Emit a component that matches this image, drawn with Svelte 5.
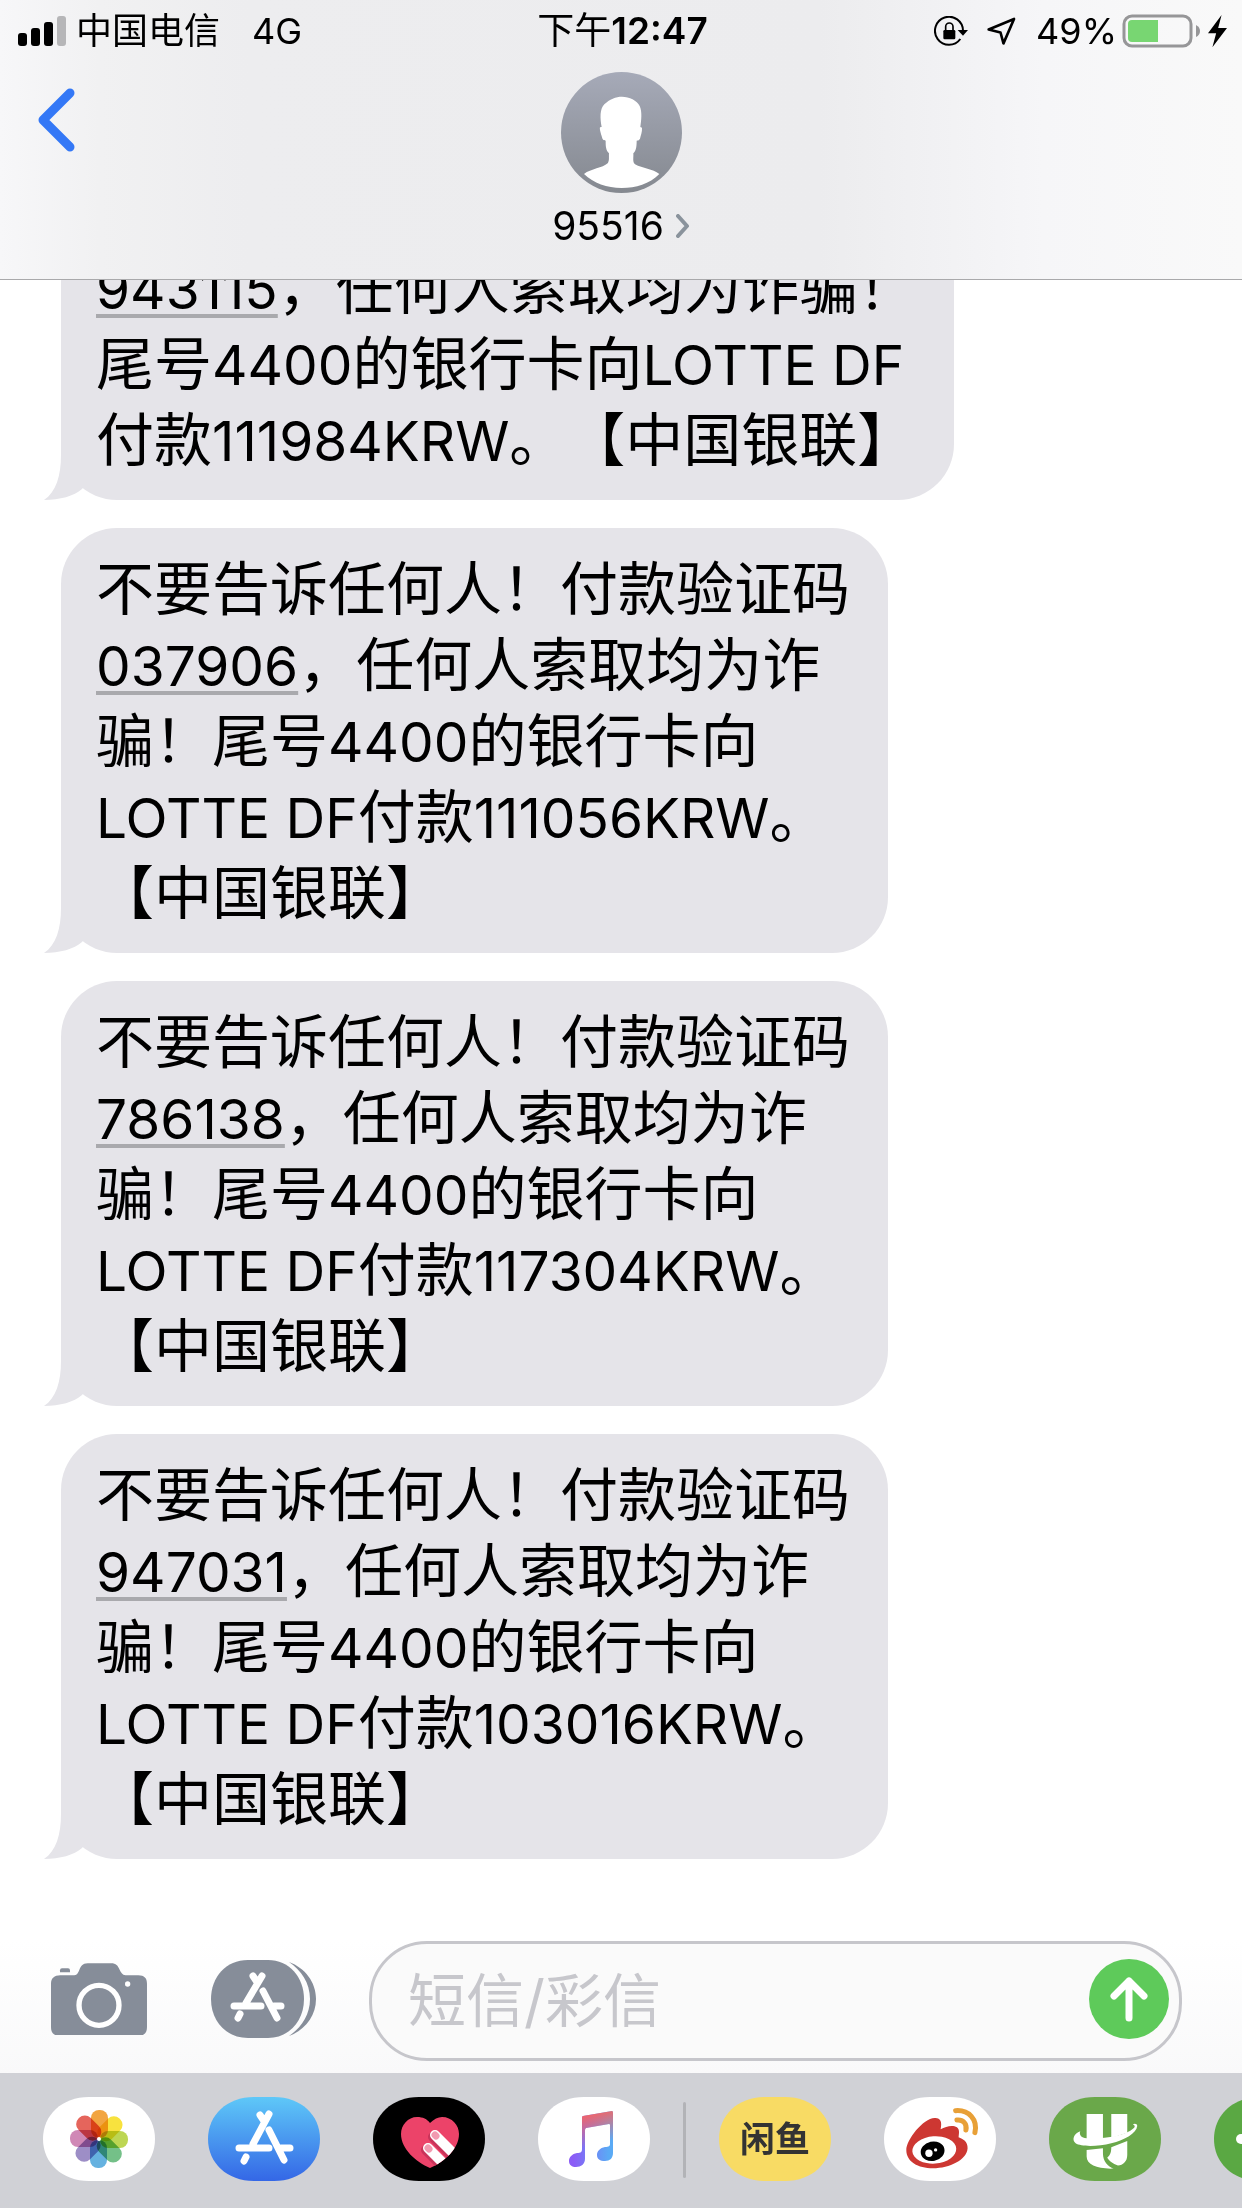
<script>
  const contact = "95516";

  const messages = [
    {
      intro: "",
      code: "943115",
      lines: ["，任何人索取均为诈骗！", "尾号4400的银行卡向LOTTE DF", "付款111984KRW。【中国银联】"]
    },
    {
      intro: "不要告诉任何人！付款验证码",
      code: "037906",
      lines: ["，任何人索取均为诈", "骗！尾号4400的银行卡向", "LOTTE DF付款111056KRW。", "【中国银联】"]
    },
    {
      intro: "不要告诉任何人！付款验证码",
      code: "786138",
      lines: ["，任何人索取均为诈", "骗！尾号4400的银行卡向", "LOTTE DF付款117304KRW。", "【中国银联】"]
    },
    {
      intro: "不要告诉任何人！付款验证码",
      code: "947031",
      lines: ["，任何人索取均为诈", "骗！尾号4400的银行卡向", "LOTTE DF付款103016KRW。", "【中国银联】"]
    }
  ];

  // odd parts are the latin runs
  const split = (line) => line.split(/([\x20-\x7e]+)/);

  const apps = [
    { id: "photos", label: "照片", color: "#ffffff" },
    { id: "store", label: "App Store", color: "url(#storeBlue)" },
    { id: "touch", label: "Digital Touch", color: "#000000" },
    { id: "music", label: "音乐", color: "#ffffff" },
    { id: "xianyu", label: "闲鱼", color: "#f8db64" },
    { id: "weibo", label: "微博", color: "#ffffff" },
    { id: "umetrip", label: "航旅", color: "#6aa84a" },
    { id: "more", label: "更多", color: "#5aa843" }
  ];

  const petals = ["#f2a541", "#f8e23e", "#bdd653", "#74c088", "#66b2e0", "#9d8ec6", "#d088b6", "#e5655c"];

  let draft = $state("");
</script>

{#snippet text(line)}
  {#each split(line) as part, i}{#if i % 2}<span class="latin">{part}</span>{:else}{part}{/if}{/each}
{/snippet}

<div class="phone">
  <header>
    <div class="status">
      <div class="status_left">
        <svg class="signal" viewBox="0 0 48 30" aria-hidden="true">
          <rect x="0" y="17" width="9" height="13" rx="3" />
          <rect x="13" y="12" width="9" height="18" rx="3" />
          <rect x="26" y="6" width="9" height="24" rx="3" />
          <rect x="39" y="0" width="9" height="30" rx="3" fill="#b6b6b8" />
        </svg>
        <span>中国电信</span>
        <span class="network">4G</span>
      </div>

      <div class="time">下午<b>12:47</b></div>

      <div class="status_right">
        <svg class="lock" viewBox="0 0 102 92" aria-hidden="true">
          <path d="M87 44A42 42 0 1 0 79 69" fill="none" stroke="#000" stroke-width="6" />
          <path d="M71 42H102L87 59Z" />
          <rect x="28" y="42" width="36" height="28" rx="4" />
          <path d="M35 44V32a11 11 0 0 1 22 0V44" fill="none" stroke="#000" stroke-width="5" />
        </svg>
        <svg class="location" viewBox="0 0 88 88" aria-hidden="true">
          <path d="M5 38L82 6L50 80L41 47Z" fill="none" stroke="#000" stroke-width="8" stroke-linejoin="round" />
        </svg>
        <span>49%</span>
        <svg class="battery" viewBox="0 0 78 34" aria-hidden="true">
          <rect x="2" y="2" width="67" height="30" rx="8" fill="none" stroke="#969698" stroke-width="3" />
          <path d="M10 6H36V28H10Q6 28 6 24V10Q6 6 10 6Z" fill="#78d672" />
          <path d="M74 11Q78 13 78 17T74 23Z" fill="#969698" />
        </svg>
        <svg class="bolt" viewBox="0 0 56 96" aria-hidden="true">
          <path d="M40 0L0 54H24L13 95L56 38H30Z" />
        </svg>
      </div>
    </div>

    <div class="nav">
      <button class="back" aria-label="返回">
        <svg viewBox="0 0 38 64"><path d="M33 5L6 32L33 59" fill="none" stroke="#3478f6" stroke-width="9" stroke-linecap="round" stroke-linejoin="round" /></svg>
      </button>
      <button class="contact">
        <svg class="avatar" viewBox="0 0 363 363" aria-hidden="true">
          <defs>
            <linearGradient id="avatarGray" x1="0" y1="0" x2="0" y2="1">
              <stop offset="0" stop-color="#a6aab8" />
              <stop offset="1" stop-color="#858990" />
            </linearGradient>
          </defs>
          <circle cx="181.500" cy="181.500" r="181.500" fill="url(#avatarGray)" />
          <path fill="#fff" d="M69 306C90 290 125 288 140 274C146 266 143 255 144 244C134 234 134 220 134 206C127 204 125 204 123 196C120 185 115 172 117 166L122 165C117 140 116 110 130 97C145 82 165 74 183 74C205 74 228 85 236 102C244 120 241 145 238 165L243 167C244 180 239 190 237 200C234 206 230 205 227 206C227 222 226 235 217 244C218 258 214 270 222 277C245 290 275 290 295 306C265 336 225 348 182 348C138 348 98 334 69 306Z" />
        </svg>
        <span class="name">
          {contact}
          <svg viewBox="0 0 14 24" aria-hidden="true"><path d="M2 2L11 12L2 22" fill="none" stroke="#8a939c" stroke-width="4" stroke-linecap="round" stroke-linejoin="round" /></svg>
        </span>
      </button>
    </div>
  </header>

  <main class="thread">
    {#each messages as message}
      <div class="bubble">
        {#if message.intro}
          <p>{message.intro}</p>
        {/if}
        {#each message.lines as line, i}
          <p>{#if i === 0}<a class="latin" href="#{message.code}">{message.code}</a>{/if}{@render text(line)}</p>
        {/each}
        <svg class="tail" viewBox="0 0 60 60" aria-hidden="true"><path d="M17 0V15C17 36 12 52 0 60C16 60 30 56 38 49L60 20L40 0Z" fill="#e5e4e9" /></svg>
      </div>
    {/each}
  </main>

  <form class="composer" onsubmit={(e) => e.preventDefault()}>
    <button class="camera" type="button" aria-label="相机">
      <svg viewBox="0 0 288 218">
        <path fill="#868d99" d="M28 37H66C78 37 80 31 84 23C90 10 94 1 110 1H180C196 1 200 8 206 20C212 32 216 37 228 37H262C280 37 288 46 288 62V192C288 210 280 218 262 218H26C8 218 0 210 0 192V62C0 46 10 37 28 37Z" />
        <path fill="#868d99" d="M27 28V22Q27 16 33 16H51Q57 16 57 22V28Z" />
        <circle cx="144" cy="127" r="60" fill="none" stroke="#fff" stroke-width="16" />
        <circle cx="230" cy="63" r="8" fill="#fff" />
      </svg>
    </button>
    <button class="drawer" type="button" aria-label="App">
      <svg viewBox="0 0 105 78">
        <path fill="#868d99" d="M78 2C94 8 105 22 105 39S94 70 78 76C90 68 99 55 99 39S90 10 78 2Z" />
        <path fill="#868d99" d="M37 0H57C78 0 93 17 93 39S78 78 57 78H37C15 78 0 61 0 39S15 0 37 0Z" />
        <g stroke="#fff" stroke-width="7" stroke-linecap="round" fill="none">
          <path d="M42 16L46 22M51 16L35 43M52 31L66 58M23 46H50M63 46H70M29 54L27 58" />
        </g>
      </svg>
    </button>
    <div class="field">
      <input type="text" placeholder="短信/彩信" aria-label="短信/彩信" bind:value={draft} />
      <button class="send" aria-label="发送">
        <svg viewBox="0 0 80 80"><path d="M40 59V22M25 37L40 22L55 37" fill="none" stroke="#fff" stroke-width="7" stroke-linecap="round" stroke-linejoin="round" /></svg>
      </button>
    </div>
  </form>

  <nav class="tray">
    {#each apps as app, i}
      {#if i === 4}
        <span class="divider"></span>
      {/if}
      <button aria-label={app.label}>
        <svg viewBox="0 0 112 84">
          <defs>
            <linearGradient id="storeBlue" x1="0" y1="0" x2="0" y2="1">
              <stop offset="0" stop-color="#5ec8f8" />
              <stop offset="1" stop-color="#3467e6" />
            </linearGradient>
          </defs>
          <path d="M46 0H66C93 0 112 18 112 42S93 84 66 84H46C19 84 0 66 0 42S19 0 46 0Z" fill={app.color} />

          {#if app.id === "photos"}
            <g class="petals">
              {#each petals as petal, n}
                <rect x="48" y="13" width="17" height="28" rx="8" fill={petal} transform="rotate({n * 45} 56 42)" />
              {/each}
            </g>
            <circle cx="56" cy="42" r="2" fill="#fff" />
          {:else if app.id === "store"}
            <path d="M52 18L56 24M61 17L45 47M61 33L76 63M31 51H61M73 51H82M38 60L36 64" fill="none" stroke="#fff" stroke-width="7" stroke-linecap="round" />
          {:else if app.id === "touch"}
            <clipPath id="heart"><path d="M57 26C61 22 65 20 69 20C79 20 86 28 86 37C86 52 71 65 57 71C43 65 28 52 28 37C28 28 35 20 44 20C50 20 54 22 57 26Z" /></clipPath>
            <g clip-path="url(#heart)" stroke-linecap="round">
              <path d="M20 10H95V80H20Z" fill="#ec4369" />
              <path d="M60 40L84 64M53 53L71 71" stroke="#c9345a" stroke-width="10" />
              <path d="M62 38L90 66M55 51L78 74" stroke="#fff" stroke-width="10" />
              <path d="M62 38L63 39M55 51L56 52" stroke="#f29ab0" stroke-width="7" />
            </g>
          {:else if app.id === "music"}
            <defs>
              <linearGradient id="noteBase" x1="0" y1="0" x2="1" y2="0">
                <stop offset="0.1" stop-color="#8b5cf6" />
                <stop offset="0.9" stop-color="#5aaaf5" />
              </linearGradient>
              <linearGradient id="noteTop" x1="0" y1="0" x2="0.200" y2="1">
                <stop offset="0.1" stop-color="#f9635f" />
                <stop offset="0.7" stop-color="#f9635f" stop-opacity="0" />
              </linearGradient>
            </defs>
            {#each ["url(#noteBase)", "url(#noteTop)"] as paint}
              <path fill={paint} d="M45 19L74 14Q75 14 75 16V56C75 61 72 64 67 64C62 64 59 62 59 58C59 54 62 51 67 50C71 50 72 49 72 47V28Q72 27 71 27L48 31Q47 32 47 33V62C47 67 43 70 38 70C34 70 31 68 31 64C31 60 34 57 39 56C43 56 44 55 44 52V21Q44 19 45 19Z" />
            {/each}
          {:else if app.id === "xianyu"}
            <text x="56" y="55" text-anchor="middle">闲鱼</text>
          {:else if app.id === "weibo"}
            <g transform="scale(0.333)">
              <path fill="#cd3732" d="M67 159C67 129 117 64 152 63C170 62 175 74 170 97C187 87 207 83 219 91C228 99 225 109 224 121C237 126 252 134 251 154C249 189 197 214 147 214C102 214 67 194 67 159Z" />
              <ellipse cx="151" cy="159" rx="66" ry="41" fill="#fff" transform="rotate(-4 151 159)" />
              <ellipse cx="146" cy="163" rx="36" ry="29" transform="rotate(-12 146 163)" />
              <circle cx="135" cy="169" r="11" fill="#fff" />
              <circle cx="155" cy="159" r="5" fill="#fff" />
              <path d="M215 41C255 38 282 68 273 107M219 69C237 67 250 80 246 99" fill="none" stroke="#e8a037" stroke-width="15" stroke-linecap="round" />
            </g>
          {:else if app.id === "umetrip"}
            <g transform="scale(0.333) translate(-563 -21)">
              <path fill="#fff" d="M676 72H725V147H676ZM750 72H798V128L750 144ZM676 180L725 175V190C725 215 740 230 757 236C710 238 676 225 676 200ZM750 172L798 153V195C798 215 785 225 770 227C755 222 742 212 738 203C748 195 750 185 750 172Z" />
              <path fill="#fff" d="M657 124C653 132 658 142 670 144C710 150 790 140 817 115C822 110 822 106 815 104C820 99 828 102 828 108C826 130 790 150 750 160C710 170 660 171 643 160C630 150 638 130 657 124Z" />
            </g>
          {:else}
            <circle cx="27" cy="42" r="5" fill="#fff" />
            <circle cx="50" cy="42" r="5" fill="#fff" />
          {/if}
        </svg>
      </button>
    {/each}
  </nav>
</div>

<style>
  :global(body) {
    margin: 0;
    background: #ffffff;
  }
  .phone {
    height: 100vh;
    display: flex;
    flex-direction: column;
    overflow: hidden;
    font-family: Inter, "Noto Sans CJK SC", sans-serif;
    color: #000000;
    text-spacing-trim: space-all;
  }
  button {
    border: 0;
    padding: 0;
    background: none;
    color: inherit;
    font: inherit;
    flex: none;
  }
  svg {
    display: block;
    flex: none;
  }
  header {
    flex: none;
    background: linear-gradient(to right, #f7f7f9, #f1f1f2 8%, #ededef 20%, #ececee 66%, #f6f6f8 84%, #f9f9f9);
    border-bottom: 1px solid #a9a9ab;
  }
  .status {
    height: 62px;
    padding: 0 15px 0 18px;
    display: grid;
    grid-template-columns: 1fr auto 1fr;
    align-items: center;
    font-size: 36px;
    line-height: 60px;
  }
  .status_left, .status_right {
    display: flex;
    align-items: center;
  }
  .status_right {
    justify-content: flex-end;
  }
  .signal {
    width: 48px;
    margin-right: 10px;
  }
  .network {
    margin-left: 32px;
  }
  .time {
    font-size: 37px;
  }
  .time b {
    font-weight: 600;
  }
  .lock {
    width: 34px;
    margin-right: 19px;
  }
  .location {
    width: 29px;
    margin-right: 20px;
  }
  .battery {
    width: 78px;
    margin: 0 8px 0 5px;
  }
  .bolt {
    width: 19px;
  }
  .nav {
    display: grid;
    grid-template-columns: 1fr auto 1fr;
    align-items: start;
    padding: 10px 37px 28px;
  }
  .back {
    width: 38px;
    margin-top: 16px;
  }
  .contact {
    display: flex;
    flex-direction: column;
    align-items: center;
    gap: 8px;
  }
  .avatar {
    width: 121px;
  }
  .name {
    display: flex;
    align-items: center;
    gap: 12px;
    font-size: 39px;
    line-height: 50px;
  }
  .name svg {
    width: 14px;
  }
  .thread {
    flex: 1;
    min-height: 0;
    overflow: hidden;
    display: flex;
    flex-direction: column;
    justify-content: flex-end;
    align-items: flex-start;
    gap: 28px;
    padding: 0 61px 82px;
  }
  .bubble {
    position: relative;
    flex: none;
    background: #e5e4e9;
    border-radius: 56px;
    padding: 23px 38px 22px 35px;
    font-size: 58px;
    line-height: 76px;
    white-space: nowrap;
  }
  .bubble p {
    height: 76px;
    margin: 0;
  }
  .latin, .bubble :global(.latin) {
    font-size: 55px;
  }
  .bubble a {
    color: inherit;
    text-decoration: underline;
    text-decoration-color: #a9a9ad;
    text-decoration-thickness: 4px;
    text-underline-offset: 5px;
    text-decoration-skip-ink: none;
  }
  .tail {
    position: absolute;
    left: -17px;
    bottom: 0;
    width: 60px;
  }
  .composer {
    flex: none;
    display: flex;
    align-items: center;
    padding: 0 60px 12px 51px;
    background: linear-gradient(#ffffff, #f9f9fa);
  }
  .camera {
    width: 96px;
    margin: 0 64px 4px 0;
  }
  .drawer {
    width: 105px;
    margin: 0 53px 4px 0;
  }
  .field {
    flex: 1;
    min-width: 0;
    box-sizing: border-box;
    height: 120px;
    display: flex;
    align-items: center;
    border: 3px solid #c6c6cb;
    border-radius: 58px;
    background: #fafafa;
    padding: 0 10px 0 36px;
  }
  input {
    flex: 1;
    min-width: 0;
    border: 0;
    padding: 0;
    outline: none;
    background: none;
    font: inherit;
    font-size: 58px;
    line-height: 80px;
  }
  input::placeholder {
    color: #c7c7cc;
    opacity: 1;
  }
  .send {
    width: 80px;
    height: 80px;
    margin-bottom: 4px;
    border-radius: 50%;
    background: #5eca5a;
  }
  .tray {
    flex: none;
    display: flex;
    align-items: flex-start;
    gap: 53px;
    padding: 24px 0 27px 43px;
    background: #d0d1d6;
    overflow: hidden;
  }
  .tray button {
    width: 112px;
  }
  .divider {
    flex: none;
    width: 3px;
    height: 76px;
    margin: 5px -20px 0;
    border-radius: 2px;
    background: #b2b3b7;
  }
  .petals {
    isolation: isolate;
  }
  .petals rect {
    mix-blend-mode: multiply;
  }
  text {
    font-size: 35px;
    font-weight: 700;
    fill: #333333;
  }
</style>
